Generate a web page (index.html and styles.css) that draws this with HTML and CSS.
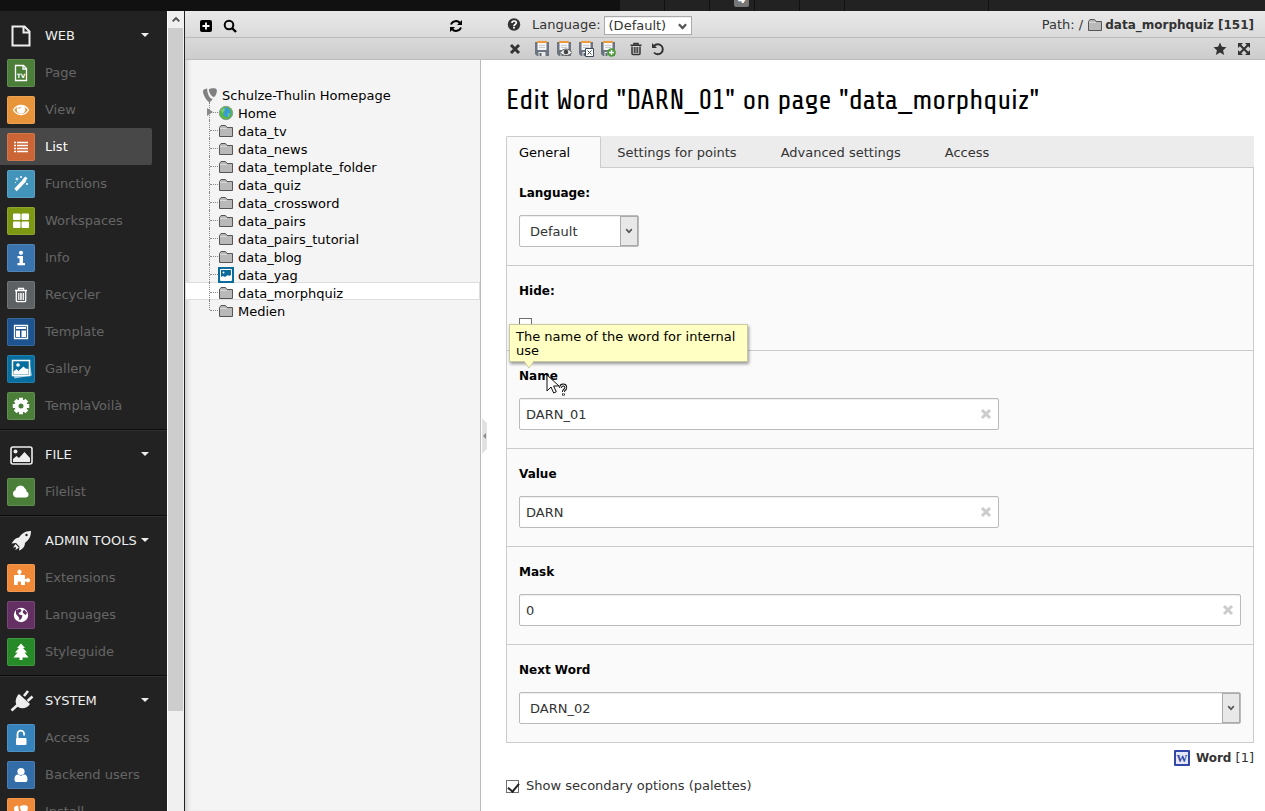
FILE: index.html
```
<!DOCTYPE html>
<html lang="en">
<head>
    <meta charset="UTF-8">
    <meta name="viewport" content="width=device-width, initial-scale=1.0">
    <title>Edit Word "DARN_01" on page "data_morphquiz"</title>
    <link rel="stylesheet" href="styles.css">
</head>
<body>
    <!-- shared icons -->
    <svg class="sprite" aria-hidden="true">
        <symbol id="folder" viewBox="0 0 16 16">
            <path d="M1.500 13.500V4.500L3 2.500h4.500l1.500 2h5.500v9z" fill="#b9b9b9" stroke="#555"/>
            <path d="M2 5.500h7" stroke="#d8d8d8"/>
        </symbol>
        <symbol id="disk" viewBox="0 0 16 16">
            <path d="M1 1h14v14H3l-2-2z" fill="#6b7480"/>
            <path d="M3.500 1h9v8h-9z" fill="#f4f4f4"/>
            <path d="M3 1h10" stroke="#ee9a3a" stroke-width="2"/>
            <path d="M5 4.500h6M5 6.500h6" stroke="#c9ccd0"/>
            <path d="M4.500 11h7v4h-7z" fill="#e9e9e9"/>
            <path d="M5.500 12h2v3h-2z" fill="#5b6470"/>
        </symbol>
        <symbol id="times" viewBox="0 0 12 12">
            <path d="M2 2l8 8M10 2l-8 8" stroke="currentColor" stroke-width="3"/>
        </symbol>
        <symbol id="chevron" viewBox="0 0 8 8">
            <path d="M.8 2L4 5.400 7.200 2" fill="none" stroke="currentColor" stroke-width="2"/>
        </symbol>
        <symbol id="typo3" viewBox="0 0 16 16">
            <path d="M1.200 3c1-.9 2.600-1.400 4.100-1.600C4.700 4.700 7 10 9.300 11.600c.5.200.9.200 1.300.1C9.900 13.500 8.700 15 7.400 15 5.200 15 1 7.500 1 4.700z"/>
            <path d="M6.900 2.300C8.600.9 14 .6 14.700 2.500c.7 2.500-1 6.600-2.600 7.600C9.800 10.300 6.500 5 6.900 2.300z"/>
        </symbol>
    </svg>

    <header class="topbar">
        <div class="topbar-tools">
            <span></span>
            <span></span>
            <span><b class="badge">4</b></span>
            <span></span>
            <span></span>
            <span class="wide"></span>
            <span class="search"></span>
        </div>
    </header>

    <div class="page">
        <nav class="menu">
            <section class="group">
                <button type="button" class="group-title">
                    <svg viewBox="0 0 28 28"><path d="M5.500 4.500h12l5 5v14h-17zM16.500 4.500v6h6" fill="none" stroke="currentColor" stroke-width="2"/></svg>
                    WEB<i class="caret"></i>
                </button>
                <a href="#" class="item"><svg class="green" viewBox="0 0 28 28"><path d="M8.500 6.500h8l3 3v12h-11zM16 6.500V10h3.500" fill="none" stroke="currentColor" stroke-width="1.300"/><text x="14" y="18.500" class="tile-text">TV</text></svg>Page</a>
                <a href="#" class="item"><svg class="amber" viewBox="0 0 28 28"><path d="M6.500 14c3.500-6 11.500-6 15 0-3.500 6-11.500 6-15 0z" fill="none" stroke="currentColor" stroke-width="1.400"/><circle cx="14" cy="13.500" r="4.300" fill="currentColor"/><path d="M11.800 13a2.500 2.500 0 0 1 2-2" fill="none" stroke="#e8943a"/></svg>View</a>
                <a href="#" class="item active"><svg class="rust" viewBox="0 0 28 28"><path d="M7 9.500h2M10 9.500h11M7 12.500h2M10 12.500h11M7 15.500h2M10 15.500h11M7 18.500h2M10 18.500h11" stroke="currentColor" stroke-width="1.600"/></svg>List</a>
                <a href="#" class="item"><svg class="sky" viewBox="0 0 28 28"><path d="M8.500 20l9.500-10" stroke="currentColor" stroke-width="3.500"/><path d="M16.500 10.500l3-3" stroke="currentColor" stroke-width="3"/><path d="M10 7.500v3M8.500 9h3M14 6v2M13 7h2M20 13v2M19 14h2M8 12.500h1" stroke="currentColor"/></svg>Functions</a>
                <a href="#" class="item"><svg class="olive" viewBox="0 0 28 28"><path d="M7 7.500h5.500V12H7zM15.500 7.500H21V12h-5.500zM7 15.500h5.500V20H7zM15.500 15.500H21V20h-5.500z" fill="currentColor" stroke="currentColor" stroke-width="2" stroke-linejoin="round"/></svg>Workspaces</a>
                <a href="#" class="item"><svg class="blue" viewBox="0 0 28 28"><circle cx="14" cy="8.800" r="2.100" fill="currentColor"/><path d="M10.500 12h5.500v7h2v2.200h-7.500V19h2v-4.800h-2z" fill="currentColor"/></svg>Info</a>
                <a href="#" class="item"><svg class="grey" viewBox="0 0 28 28"><path d="M8 9.500h12M11.500 9V7.500h5V9M9.300 10v9.500q0 1.200 1.200 1.200h7q1.200 0 1.200-1.200V10" fill="none" stroke="currentColor" stroke-width="1.300"/><path d="M11.700 12v7M13.300 12v7M14.800 12v7M16.400 12v7" stroke="currentColor"/></svg>Recycler</a>
                <a href="#" class="item"><svg class="navy" viewBox="0 0 28 28"><path d="M7.500 7.500h13v13h-13z" fill="none" stroke="currentColor" stroke-width="1.300"/><path d="M9 9h10v2H9zM9 12.500h4V19H9zM14.500 12.500H19V19h-4.500z" fill="currentColor"/></svg>Template</a>
                <a href="#" class="item"><svg class="teal" viewBox="0 0 28 28"><path d="M6 19l1.500 4.500L25 20.500 22.500 8z" fill="#9cc6da"/><path d="M5.500 5.500h17v15h-17z" fill="#066f9f" stroke="currentColor" stroke-width="1.500"/><circle cx="11" cy="10" r="1.800" fill="currentColor"/><path d="M6.500 19.500v-3l3-2.500 2 2 5-4.500 2 2 3 .5v5.500z" fill="currentColor"/></svg>Gallery</a>
                <a href="#" class="item"><svg class="green" viewBox="0 0 28 28"><circle cx="14" cy="14" r="4.500" fill="none" stroke="currentColor" stroke-width="4"/><path d="M14 5.800V9M14 19v3.200M5.800 14H9M19 14h3.200M8.200 8.200l2.300 2.300M17.500 17.500l2.300 2.300M8.200 19.800l2.300-2.300M17.500 10.500l2.300-2.300" stroke="currentColor" stroke-width="4"/></svg>TemplaVoilà</a>
            </section>

            <section class="group">
                <button type="button" class="group-title">
                    <svg viewBox="0 0 28 28"><rect x="4" y="6" width="21" height="17" rx="2" fill="none" stroke="currentColor" stroke-width="1.600"/><circle cx="8.500" cy="10.500" r="2" fill="currentColor"/><path d="M6 21v-3l3.500-3 2.500 2 5.500-6 5.500 6v4z" fill="currentColor"/></svg>
                    FILE<i class="caret"></i>
                </button>
                <a href="#" class="item"><svg class="green" viewBox="0 0 28 28"><path d="M9.500 19.500a3.700 3.700 0 0 1-1-7.200A5 5 0 0 1 18 10.500a3 3 0 0 1 1.500 3 3.100 3.100 0 0 1-.5 6z" fill="currentColor"/></svg>Filelist</a>
            </section>

            <section class="group">
                <button type="button" class="group-title">
                    <svg viewBox="0 0 28 28"><path d="M24 4c-6-.3-9.500 3-12 6.500-3 0-5 2-7.500 6l4.500-.5 3.500 3.500-.5 4 1.500-.500c3-2 4.500-4 4.500-7 3.500-3 6-6 6-12zM8.500 17l-2.500 3.500 3-.5-.5 3 3.500-2.500z" fill="currentColor"/><circle cx="19.500" cy="8" r="1.200" fill="#222"/></svg>
                    ADMIN TOOLS<i class="caret"></i>
                </button>
                <a href="#" class="item"><svg class="orange" viewBox="0 0 28 28"><path d="M7 11h4.500V9.500a2 2 0 1 1 2 0V11H18v4h1.500a2 2 0 1 1 0 2.500H18V21h-4v-2a1.700 1.700 0 0 0-3.400 0v2H7z" fill="currentColor"/></svg>Extensions</a>
                <a href="#" class="item"><svg class="purple" viewBox="0 0 28 28"><circle cx="14" cy="14" r="7.200" fill="currentColor"/><path d="M9 9l4-1.300 1.500 1.600-1 2-2 .7 1 1.500 3 1-1 3-2 2-.5-3-3-3.500zM17 8.500l3 3-1 2.500-2-1-1.500-2z" fill="#642f62"/></svg>Languages</a>
                <a href="#" class="item"><svg class="leaf" viewBox="0 0 28 28"><path d="M14 5.500l4 4.500h-2l4 4.500h-2.500l4 5h-6V22h-3v-2.500h-6l4-5H8l4-4.500h-2z" fill="currentColor"/></svg>Styleguide</a>
            </section>

            <section class="group">
                <button type="button" class="group-title">
                    <svg viewBox="0 0 28 28"><path d="M4.500 23.500l6-5.500M17 9l4-5M20.500 14l5-4.500" stroke="currentColor" stroke-width="2.600"/><path d="M12 7l11 10c-3 4.500-8 5.500-12 3-3.500-3.500-3-9 1-13z" fill="currentColor"/></svg>
                    SYSTEM<i class="caret"></i>
                </button>
                <a href="#" class="item"><svg class="cyan" viewBox="0 0 28 28"><path d="M10.500 14.500V10a3.300 3.300 0 0 1 6.600 0v1.500" fill="none" stroke="currentColor" stroke-width="1.800"/><rect x="9" y="14" width="10.500" height="7" rx="1" fill="currentColor"/></svg>Access</a>
                <a href="#" class="item"><svg class="steel" viewBox="0 0 28 28"><circle cx="14" cy="10.500" r="3.600" fill="currentColor"/><path d="M7.500 18.500c0-4 2-5 3.500-5 2 1.500 4 1.500 6 0 1.500 0 3.500 1 3.500 5 0 2-1 2.500-2 2.500h-9c-1 0-2-.5-2-2.500z" fill="currentColor"/></svg>Backend users</a>
                <a href="#" class="item"><svg class="orange" viewBox="0 0 28 28"><use href="#typo3" x="6" y="6" width="16" height="16" fill="currentColor"/></svg>Install</a>
            </section>
        </nav>

        <div class="scrollbar">
            <svg viewBox="0 0 17 17"><path d="M5 10.500L8.500 7l3.500 3.500" fill="none" stroke="#505050" stroke-width="2"/></svg>
            <div class="thumb"></div>
        </div>

        <aside class="tree-panel">
            <div class="bar bar-top">
                <button type="button" class="icon-button" aria-label="New page"><svg viewBox="0 0 14 14"><rect x="1" y="1" width="12" height="12" rx="2"/><path d="M7 3.500v7M3.500 7h7" stroke="#fff" stroke-width="1.800"/></svg></button>
                <button type="button" class="icon-button" aria-label="Filter"><svg viewBox="0 0 14 14"><circle cx="6" cy="6" r="4.300" fill="none" stroke="currentColor" stroke-width="2"/><path d="M9 9l4 4" stroke="currentColor" stroke-width="2.400"/></svg></button>
                <button type="button" class="icon-button refresh" aria-label="Refresh"><svg viewBox="0 0 14 14"><path d="M2 5.500a5.300 5.300 0 0 1 9-1.500M12 8.500a5.300 5.300 0 0 1-9 1.500" fill="none" stroke="currentColor" stroke-width="2"/><path d="M13 1v5H8zM1 13V8h5z"/></svg></button>
            </div>
            <div class="bar bar-bottom"></div>
            <ul class="tree">
                <li class="root"><svg fill="#808080"><use href="#typo3"/></svg><a href="#">Schulze-Thulin Homepage</a></li>
                <li><span class="branch open"></span><svg viewBox="0 0 16 16"><circle cx="8" cy="8" r="6.700" fill="#55b948" stroke="#8e9a90"/><path d="M5 3.500l4-1 3 2.500 1 4-3 3.500-3-1-2-2 1.500-3z" fill="#3b9bd3"/><path d="M3 5l3-2 1 2-3 3zM10 8l2 1-2 3z" fill="#7bd17a"/></svg><a href="#">Home</a></li>
                <li><span class="branch"></span><svg><use href="#folder"/></svg><a href="#">data_tv</a></li>
                <li><span class="branch"></span><svg><use href="#folder"/></svg><a href="#">data_news</a></li>
                <li><span class="branch"></span><svg><use href="#folder"/></svg><a href="#">data_template_folder</a></li>
                <li><span class="branch"></span><svg><use href="#folder"/></svg><a href="#">data_quiz</a></li>
                <li><span class="branch"></span><svg><use href="#folder"/></svg><a href="#">data_crossword</a></li>
                <li><span class="branch"></span><svg><use href="#folder"/></svg><a href="#">data_pairs</a></li>
                <li><span class="branch"></span><svg><use href="#folder"/></svg><a href="#">data_pairs_tutorial</a></li>
                <li><span class="branch"></span><svg><use href="#folder"/></svg><a href="#">data_blog</a></li>
                <li><span class="branch"></span><svg viewBox="0 0 16 16"><path d="M0 0h16v16H0z" fill="#0b6c9c"/><path d="M2.500 2.500h11v11h-11z" fill="none" stroke="#fff"/><circle cx="5.500" cy="5.500" r="1" fill="#fff"/><path d="M3 13v-3l2-1 2 1 3-2 1 1 2-1v5z" fill="#fff"/></svg><a href="#">data_yag</a></li>
                <li class="selected"><span class="branch"></span><svg><use href="#folder"/></svg><a href="#">data_morphquiz</a></li>
                <li><span class="branch last"></span><svg><use href="#folder"/></svg><a href="#">Medien</a></li>
            </ul>
        </aside>

        <main class="content">
            <div class="bar bar-top">
                <button type="button" class="icon-button" aria-label="Help"><svg viewBox="0 0 14 14"><circle cx="7" cy="6.500" r="6.200"/><path d="M4.900 5q.2-2 2.200-2 2.200 0 2.200 1.800 0 1-1.200 1.600Q7 7 7 8" fill="none" stroke="#fff" stroke-width="1.700"/><path d="M6.100 8.800h1.800v1.600H6.100z" fill="#fff"/></svg></button>
                <label for="doc-language">Language:</label>
                <span class="select small">
                    <select id="doc-language"><option>(Default)</option></select>
                    <svg><use href="#chevron"/></svg>
                </span>
                <div class="path">Path: / <svg><use href="#folder"/></svg><b>data_morphquiz [151]</b></div>
            </div>
            <div class="bar bar-bottom">
                <button type="button" class="icon-button" aria-label="Close"><svg><use href="#times"/></svg></button>
                <div class="saves">
                    <button type="button" class="icon-button" aria-label="Save"><svg viewBox="0 0 16 16"><use href="#disk"/></svg></button>
                    <button type="button" class="icon-button" aria-label="Save and view"><svg viewBox="0 0 16 16"><use href="#disk"/><path d="M4 11.500c3-4.500 9-4.500 12 0-3 4-9 4-12 0z" fill="#eee" stroke="#555"/><circle cx="10" cy="11" r="2.300" fill="#444"/></svg></button>
                    <button type="button" class="icon-button" aria-label="Save and close"><svg viewBox="0 0 16 16"><use href="#disk"/><path d="M7.500 7.500h8v8h-8z" fill="#fff" stroke="#3f4a5a"/><path d="M9.500 9.500l4 4M13.500 9.500l-4 4" stroke="#3f4a5a"/></svg></button>
                    <button type="button" class="icon-button" aria-label="Save and create new"><svg viewBox="0 0 16 16"><use href="#disk"/><circle cx="11.500" cy="11.500" r="4.300" fill="#4c9a3c"/><path d="M11.500 9v5M9 11.500h5" stroke="#fff" stroke-width="1.400"/></svg></button>
                </div>
                <div class="edits">
                    <button type="button" class="icon-button" aria-label="Delete"><svg viewBox="0 0 14 14"><path d="M1.500 3.300h11M5 3V1.500h4V3M3 4.500v7q0 1 1 1h6q1 0 1-1v-7" fill="none" stroke="currentColor" stroke-width="1.500"/><path d="M5.300 5v6M7 5v6M8.700 5v6" stroke="currentColor" stroke-width="1.100"/></svg></button>
                    <button type="button" class="icon-button" aria-label="Undo"><svg viewBox="0 0 14 14"><path d="M3 4a5 5 0 1 1 0 6.500" fill="none" stroke="currentColor" stroke-width="1.900"/><path d="M1 1v5h5z"/></svg></button>
                </div>
                <div class="shortcuts">
                    <button type="button" class="icon-button" aria-label="Bookmark"><svg viewBox="0 0 14 14"><path d="M7 .5l1.900 4.200 4.600.5-3.400 3.100 1 4.700L7 10.600 2.900 13l1-4.700L.5 5.200l4.600-.5z"/></svg></button>
                    <button type="button" class="icon-button" aria-label="Full screen"><svg viewBox="0 0 14 14"><path d="M2 2l10 10M12 2L2 12" stroke="currentColor" stroke-width="2"/><path d="M1 1h5L1 6zM13 1v5L8 1zM1 13V8l5 5zM13 13H8l5-5z"/></svg></button>
                </div>
            </div>

            <button type="button" class="splitter" aria-label="Collapse tree"><svg viewBox="0 0 5 36"><path d="M0 0l5 5v26l-5 5z" fill="#e2e2e2"/><path d="M4 15v6l-3-3z" fill="#888"/></svg></button>

            <form class="editor">
                <h1>Edit Word "DARN_01" on page "data_morphquiz"</h1>
                <div class="tabs">
                    <button type="button" class="tab current">General</button>
                    <button type="button" class="tab">Settings for points</button>
                    <button type="button" class="tab">Advanced settings</button>
                    <button type="button" class="tab">Access</button>
                </div>
                <div class="panel">
                    <div class="field">
                        <label for="language">Language:</label>
                        <span class="select short">
                            <select id="language"><option>Default</option></select>
                            <svg viewBox="-5 -11 18 30"><use href="#chevron" width="8" height="8"/></svg>
                        </span>
                    </div>
                    <div class="field">
                        <label for="hide">Hide:</label>
                        <input type="checkbox" id="hide">
                    </div>
                    <div class="field">
                        <label for="name">Name</label>
                        <span class="text medium"><input type="text" id="name" value="DARN_01"><button type="button" aria-label="Clear name"><svg><use href="#times"/></svg></button></span>
                        <div class="tooltip" role="tooltip">The name of the word for internal use
                            <svg viewBox="0 0 10 8"><path d="M0 0l5 7 5-7" fill="#ffffc3" stroke="#c9c9a4"/></svg>
                        </div>
                        <svg class="cursor" viewBox="0 0 22 24"><path d="M1 1v16l4-4 2.700 6 2.600-1.200L7.600 12H13z" fill="#fff" stroke="#111"/><path d="M14.500 14q0-3 2.700-3 2.600 0 2.600 2.500 0 1.500-1.500 2.500-.9.600-.9 2M17.400 19.500v2" fill="none" stroke="#111" stroke-width="2.800"/><path d="M14.500 14q0-3 2.700-3 2.600 0 2.600 2.500 0 1.500-1.500 2.500-.9.600-.9 2M17.400 20v1" fill="none" stroke="#fff"/></svg>
                    </div>
                    <div class="field">
                        <label for="value">Value</label>
                        <span class="text medium"><input type="text" id="value" value="DARN"><button type="button" aria-label="Clear value"><svg><use href="#times"/></svg></button></span>
                    </div>
                    <div class="field">
                        <label for="mask">Mask</label>
                        <span class="text"><input type="text" id="mask" value="0"><button type="button" aria-label="Clear mask"><svg><use href="#times"/></svg></button></span>
                    </div>
                    <div class="field">
                        <label for="next">Next Word</label>
                        <span class="select">
                            <select id="next"><option>DARN_02</option></select>
                            <svg viewBox="-5 -11 18 30"><use href="#chevron" width="8" height="8"/></svg>
                        </span>
                    </div>
                </div>
                <div class="record"><span class="word-icon">W</span><b>Word</b> [1]</div>
                <div class="secondary">
                    <input type="checkbox" id="palettes" checked>
                    <label for="palettes">Show secondary options (palettes)</label>
                </div>
            </form>
        </main>
    </div>
</body>
</html>
```
FILE: styles.css
```
* {
    box-sizing: border-box;
}

body {
    display: flex;
    flex-direction: column;
    height: 100vh;
    margin: 0;
    overflow: hidden;
    font: 13px/18px Verdana, "DejaVu Sans", sans-serif;
    color: #333;
    background: #fff;
}

button, input, select {
    margin: 0;
    font: inherit;
    color: inherit;
}

button {
    padding: 0;
    border: 0;
    background: none;
    cursor: pointer;
}

a {
    color: inherit;
    text-decoration: none;
}

b {
    font-size: 12px;
}

svg {
    display: block;
    flex: none;
}

.sprite {
    position: absolute;
    width: 0;
    height: 0;
}

/* top bar */
.topbar {
    flex: none;
    display: flex;
    justify-content: flex-end;
    height: 11px;
    background: #111;
}

.topbar-tools {
    display: flex;
    background: #222;
}

.topbar-tools span {
    position: relative;
    width: 45px;
    border-right: 1px solid #111;
}

.topbar-tools .wide {
    width: 144px;
}

.topbar-tools .search {
    width: 276px;
    border: 0;
}

.badge {
    position: absolute;
    right: 5px;
    bottom: 4px;
    width: 15px;
    height: 15px;
    border-radius: 2px;
    background: #777;
    color: #fff;
    font-size: 11px;
    line-height: 15px;
    text-align: center;
}

.page {
    flex: 1;
    display: flex;
    min-height: 0;
}

/* module menu */
.menu {
    flex: none;
    width: 167px;
    overflow: hidden;
    background: #222;
}

.group {
    padding: 6px 0 5px;
    border-bottom: 1px solid #0c0c0c;
    box-shadow: 0 1px #303030;
}

.group-title, .item {
    display: flex;
    align-items: center;
    width: 152px;
    height: 37px;
    padding-left: 7px;
}

.group-title {
    color: #eee;
    white-space: nowrap;
}

.group svg {
    width: 28px;
    height: 28px;
    margin-right: 10px;
    border-radius: 2px;
}

.caret {
    margin: 0 3px 2px auto;
    border: 4px solid transparent;
    border-top: 4px solid #eee;
    border-bottom: 0;
}

.item {
    color: #666;
}

.item svg {
    color: #fff;
    box-shadow: inset 0 0 0 1px rgba(255, 255, 255, 0.12);
}

.item.active {
    border-radius: 0 2px 2px 0;
    background: #484848;
    color: #fff;
}

.tile-text {
    fill: #fff;
    font: bold 6px "DejaVu Sans", sans-serif;
    text-anchor: middle;
}

.green { background: #4b7e38; }
.amber { background: #e8943a; }
.rust { background: #cb6535; }
.sky { background: #4294bb; }
.olive { background: #7d9914; }
.blue { background: #3a74ae; }
.grey { background: #5d6163; }
.navy { background: #1d548f; }
.teal { background: #066f9f; }
.orange { background: #f08a38; }
.purple { background: #642f62; }
.leaf { background: #278a28; }
.cyan { background: #3682bb; }
.steel { background: #326da8; }

.scrollbar {
    flex: none;
    width: 18px;
    border-left: 1px solid #fff;
    border-right: 1px solid #222;
    background: #f0f0f0;
}

.scrollbar svg {
    width: 16px;
    height: 17px;
}

.thumb {
    height: 683px;
    margin-right: 1px;
    background: #cdcdcd;
}

/* doc header bars */
.bar {
    display: flex;
    align-items: center;
    border-bottom: 1px solid #bbb;
}

.bar-top {
    height: 27px;
    background: linear-gradient(#e9e9e9, #dadada);
}

.bar-bottom {
    height: 22px;
    background: linear-gradient(#d9d9d9, #cdcdcd);
}

.icon-button svg {
    width: 14px;
    height: 14px;
    fill: currentColor;
}

/* page tree */
.tree-panel {
    flex: none;
    width: 296px;
    border-right: 1px solid #bbb;
    background: #f4f4f4;
    box-shadow: inset 5px 0 5px -3px #ccc;
    color: #000;
}

.tree-panel .bar {
    gap: 10px;
    margin-right: -1px;
    padding: 3px 18px 0 14px;
}

.tree-panel .refresh {
    margin-left: auto;
}

.tree {
    margin: 0;
    padding: 24px 0 0;
    list-style: none;
    line-height: 24px;
}

.tree li {
    display: flex;
    height: 18px;
    padding-left: 24px;
    white-space: nowrap;
}

.tree .root {
    padding-left: 17px;
}

.tree .selected {
    background: #fff;
    box-shadow: inset 0 0 0 1px #ddd;
}

.tree svg {
    width: 16px;
    height: 16px;
    margin: 3px 4px 0 0;
}

.branch {
    position: relative;
    width: 9px;
    border-left: 1px dotted #888;
}

.branch::after {
    content: "";
    display: block;
    margin-top: 10px;
    border-top: 1px dotted #888;
}

.branch.last {
    height: 10px;
}

.branch.open::before {
    content: "";
    position: absolute;
    top: 6px;
    left: -3px;
    border: 4px solid transparent;
    border-left: 6px solid #888;
    border-right: 0;
}

/* content */
.content {
    position: relative;
    flex: 1;
    min-width: 0;
}

.content .bar {
    padding: 0 11px 0 26px;
}

.content .bar-top {
    padding-top: 2px;
}

.content .bar-top label {
    margin: 0 3px 0 11px;
}

.path {
    display: flex;
    align-items: center;
    margin-left: auto;
    white-space: pre;
}

.path svg {
    width: 16px;
    height: 16px;
    margin-right: 2px;
}

.content .bar-bottom {
    padding-left: 28px;
}

.bar-bottom > .icon-button svg {
    width: 12px;
    height: 12px;
}

.saves {
    display: flex;
    gap: 6px;
    margin-left: 13px;
}

.saves svg {
    width: 16px;
    height: 16px;
}

.edits {
    display: flex;
    gap: 8px;
    margin-left: 13px;
}

.shortcuts {
    display: flex;
    gap: 10px;
    margin: 0 3px 0 auto;
}

.splitter {
    position: absolute;
    top: 407px;
    left: 1px;
}

.splitter svg {
    width: 5px;
    height: 36px;
}

.editor {
    padding: 22px 11px 0 25px;
}

h1 {
    margin: 0 0 18px;
    color: #000;
    font: 28px/36px "Share Tech", "Liberation Sans Narrow", "DejaVu Sans Condensed", sans-serif;
    white-space: nowrap;
}

.tabs {
    display: flex;
    height: 32px;
    background: #ececec;
    box-shadow: inset 0 -1px #ccc;
}

.tab {
    padding: 2px 28px 0 16px;
    white-space: nowrap;
}

.tab.current {
    padding: 1px 30px 0 12px;
    border: 1px solid #ccc;
    border-bottom: 0;
    border-radius: 2px 2px 0 0;
    background: #fafafa;
    color: #000;
}

.panel {
    border: 1px solid #ccc;
    border-width: 0 1px;
    background: #fafafa;
}

.field {
    position: relative;
    padding: 16px 12px 18px;
    border-bottom: 1px solid #ccc;
}

.field > label {
    display: block;
    margin-bottom: 13px;
    color: #000;
    font-weight: bold;
    font-size: 12px;
}

input[type="checkbox"] {
    appearance: none;
    display: block;
    width: 13px;
    height: 13px;
    border: 1px solid #707070;
    background: #fff;
}

input[type="checkbox"]:checked::before {
    content: "";
    display: block;
    width: 5px;
    height: 9px;
    margin-left: 3px;
    border: solid #222;
    border-width: 0 2px 2px 0;
    transform: rotate(40deg);
}

.field input[type="checkbox"] {
    margin: 18px 0 1px;
}

.text, .select {
    display: flex;
    position: relative;
    height: 32px;
    border: 1px solid #bbb;
    border-radius: 2px;
    background: #fff;
    box-shadow: inset 0 1px 1px #eee;
}

.medium {
    width: 480px;
}

.short {
    width: 120px;
}

.text input {
    flex: 1;
    min-width: 0;
    padding: 2px 6px 0;
    border: 0;
    background: none;
}

.text button {
    padding: 0 6px;
    color: #ccc;
}

.text button svg {
    width: 12px;
    height: 12px;
}

.select select {
    flex: 1;
    min-width: 0;
    padding: 2px 24px 0 10px;
    border: 0;
    appearance: none;
    background: none;
}

.select svg {
    position: absolute;
    top: 0;
    right: 0;
    width: 18px;
    height: 30px;
    border: 1px solid #aaa;
    background: #e8e8e8;
    color: #555;
    pointer-events: none;
}

.select.small {
    width: 88px;
    height: 19px;
    border-color: #aaa;
    border-radius: 0;
}

.select.small select {
    padding: 0 12px 0 4px;
}

.select.small svg {
    top: 5px;
    right: 4px;
    width: 9px;
    height: 9px;
    border: 0;
    background: none;
}

.tooltip {
    position: absolute;
    top: -27px;
    left: 2px;
    width: 239px;
    padding: 5px 6px 3px;
    border: 1px solid #c9c9a4;
    background: #ffffc3;
    box-shadow: 1px 2px 3px rgba(0, 0, 0, 0.4);
    color: #000;
    line-height: 14px;
}

.tooltip svg {
    position: absolute;
    top: 100%;
    left: 14px;
    width: 10px;
    height: 8px;
}

.cursor {
    position: absolute;
    top: 23px;
    left: 39px;
    width: 22px;
    height: 24px;
}

.record {
    display: flex;
    align-items: center;
    justify-content: flex-end;
    margin-top: 6px;
    white-space: pre;
}

.word-icon {
    width: 16px;
    height: 16px;
    margin-right: 6px;
    border: 2px solid #3247a6;
    border-radius: 1px;
    background: #e4e8f8;
    color: #3247a6;
    font: bold 11px/12px "Liberation Serif", serif;
    text-align: center;
}

.secondary {
    display: flex;
    align-items: center;
    gap: 7px;
    margin-top: 10px;
}
```
